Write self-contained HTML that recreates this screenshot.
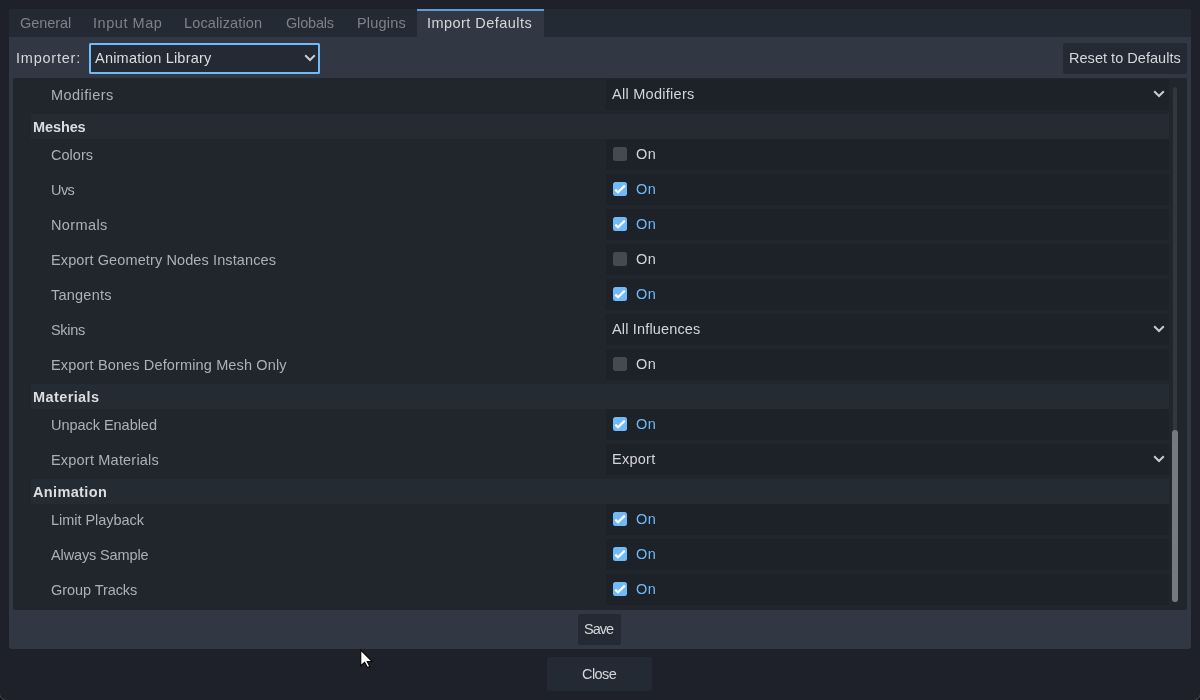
<!DOCTYPE html>
<html><head><meta charset="utf-8">
<style>
*{box-sizing:border-box;margin:0;padding:0}
html,body{width:1200px;height:700px;overflow:hidden;background:#1e2129;font-family:"Liberation Sans",sans-serif;font-size:14.5px;position:relative}
.a{position:absolute}
.t{position:absolute;white-space:nowrap;line-height:0;height:0;margin-top:-5px;will-change:transform}
.b{font-weight:bold}
</style></head><body>
<div class="a" style="left:9px;top:9px;width:1182px;height:28px;background:#232a33;border-radius:3px 3px 0 0"></div>
<div class="a" style="left:417px;top:9px;width:127px;height:28px;background:#313743;border-top:2px solid #619dd2"></div>
<div class="t" style="left:20.30px;top:28px;color:#7e8187;letter-spacing:-0.077px">General</div>
<div class="t" style="left:93.20px;top:28px;color:#7e8187;letter-spacing:0.547px">Input Map</div>
<div class="t" style="left:184.40px;top:28px;color:#7e8187;letter-spacing:0.135px">Localization</div>
<div class="t" style="left:285.60px;top:28px;color:#7e8187;letter-spacing:-0.186px">Globals</div>
<div class="t" style="left:356.60px;top:28px;color:#7e8187;letter-spacing:0.182px">Plugins</div>
<div class="t" style="left:427.30px;top:28px;color:#d6d7da;letter-spacing:0.453px">Import Defaults</div>
<div class="a" style="left:9px;top:37px;width:1182px;height:612px;background:#313743;border-radius:0 0 3px 3px"></div>
<div class="t" style="left:16.40px;top:63px;color:#d6d7da;letter-spacing:0.777px">Importer:</div>
<div class="a" style="left:89px;top:43px;width:231px;height:31px;background:#232a33;border:2px solid #70bafa;border-radius:1.5px"></div>
<div class="t" style="left:95.40px;top:63px;color:#dcdde0;letter-spacing:0.214px">Animation Library</div>
<svg class="a" style="left:304px;top:54px" width="12" height="8" viewBox="0 0 12 8"><path d="M1.2 1.2 L6 6 L10.8 1.2" fill="none" stroke="#cacbce" stroke-width="2"/></svg>
<div class="a" style="left:1063px;top:43px;width:124px;height:31px;background:#242a33;border-radius:2px"></div>
<div class="t" style="left:1068.75px;top:63px;color:#d6d7da;letter-spacing:0.036px">Reset to Defaults</div>
<div class="a" style="left:13px;top:78px;width:1174px;height:532px;background:#21262d;border-radius:2px;overflow:hidden">
<div class="a" style="left:593px;top:1px;width:563px;height:31px;background:#1d2128;border-radius:2px"></div>
<div class="t" style="left:37.70px;top:22px;color:#aeb0b4;letter-spacing:0.429px">Modifiers</div>
<div class="t" style="left:598.50px;top:21px;color:#d4d5d8;letter-spacing:0.274px">All Modifiers</div>
<svg class="a" style="left:1140px;top:12px" width="12" height="8" viewBox="0 0 12 8"><path d="M1.2 1.2 L6 6 L10.8 1.2" fill="none" stroke="#cacbce" stroke-width="2"/></svg>
<div class="a" style="left:18px;top:36px;width:1138px;height:25px;background:#242b33"></div>
<div class="t b" style="left:19.80px;top:54px;color:#dcdde0;letter-spacing:-0.106px">Meshes</div>
<div class="a" style="left:593px;top:61px;width:563px;height:31px;background:#1d2128;border-radius:2px"></div>
<div class="t" style="left:37.70px;top:82px;color:#aeb0b4;letter-spacing:0.030px">Colors</div>
<div class="a" style="left:600px;top:69px;width:14px;height:14px;border-radius:2.5px;background:#464950"></div>
<div class="t" style="left:622.70px;top:81px;color:#d4d5d8;letter-spacing:0.421px">On</div>
<div class="a" style="left:593px;top:96px;width:563px;height:31px;background:#1d2128;border-radius:2px"></div>
<div class="t" style="left:37.70px;top:117px;color:#aeb0b4;letter-spacing:-0.561px">Uvs</div>
<svg class="a" style="left:600px;top:104px" width="14" height="14" viewBox="0 0 14 14"><rect x="0" y="0" width="14" height="14" rx="2.5" fill="#70bafa"/><path d="M2.3 7.6 L5 10.3 L11.8 3.6" fill="none" stroke="#fff" stroke-width="2.2"/></svg>
<div class="t" style="left:622.70px;top:116px;color:#70bafa;letter-spacing:0.421px">On</div>
<div class="a" style="left:593px;top:131px;width:563px;height:31px;background:#1d2128;border-radius:2px"></div>
<div class="t" style="left:37.70px;top:152px;color:#aeb0b4;letter-spacing:0.379px">Normals</div>
<svg class="a" style="left:600px;top:139px" width="14" height="14" viewBox="0 0 14 14"><rect x="0" y="0" width="14" height="14" rx="2.5" fill="#70bafa"/><path d="M2.3 7.6 L5 10.3 L11.8 3.6" fill="none" stroke="#fff" stroke-width="2.2"/></svg>
<div class="t" style="left:622.70px;top:151px;color:#70bafa;letter-spacing:0.421px">On</div>
<div class="a" style="left:593px;top:166px;width:563px;height:31px;background:#1d2128;border-radius:2px"></div>
<div class="t" style="left:37.70px;top:187px;color:#aeb0b4;letter-spacing:0.111px">Export Geometry Nodes Instances</div>
<div class="a" style="left:600px;top:174px;width:14px;height:14px;border-radius:2.5px;background:#464950"></div>
<div class="t" style="left:622.70px;top:186px;color:#d4d5d8;letter-spacing:0.421px">On</div>
<div class="a" style="left:593px;top:201px;width:563px;height:31px;background:#1d2128;border-radius:2px"></div>
<div class="t" style="left:37.70px;top:222px;color:#aeb0b4;letter-spacing:0.229px">Tangents</div>
<svg class="a" style="left:600px;top:209px" width="14" height="14" viewBox="0 0 14 14"><rect x="0" y="0" width="14" height="14" rx="2.5" fill="#70bafa"/><path d="M2.3 7.6 L5 10.3 L11.8 3.6" fill="none" stroke="#fff" stroke-width="2.2"/></svg>
<div class="t" style="left:622.70px;top:221px;color:#70bafa;letter-spacing:0.421px">On</div>
<div class="a" style="left:593px;top:236px;width:563px;height:31px;background:#1d2128;border-radius:2px"></div>
<div class="t" style="left:37.70px;top:257px;color:#aeb0b4;letter-spacing:-0.327px">Skins</div>
<div class="t" style="left:598.50px;top:256px;color:#d4d5d8;letter-spacing:0.162px">All Influences</div>
<svg class="a" style="left:1140px;top:247px" width="12" height="8" viewBox="0 0 12 8"><path d="M1.2 1.2 L6 6 L10.8 1.2" fill="none" stroke="#cacbce" stroke-width="2"/></svg>
<div class="a" style="left:593px;top:271px;width:563px;height:31px;background:#1d2128;border-radius:2px"></div>
<div class="t" style="left:37.70px;top:292px;color:#aeb0b4;letter-spacing:0.137px">Export Bones Deforming Mesh Only</div>
<div class="a" style="left:600px;top:279px;width:14px;height:14px;border-radius:2.5px;background:#464950"></div>
<div class="t" style="left:622.70px;top:291px;color:#d4d5d8;letter-spacing:0.421px">On</div>
<div class="a" style="left:18px;top:306px;width:1138px;height:25px;background:#242b33"></div>
<div class="t b" style="left:19.80px;top:324px;color:#dcdde0;letter-spacing:0.400px">Materials</div>
<div class="a" style="left:593px;top:331px;width:563px;height:31px;background:#1d2128;border-radius:2px"></div>
<div class="t" style="left:37.70px;top:352px;color:#aeb0b4;letter-spacing:-0.034px">Unpack Enabled</div>
<svg class="a" style="left:600px;top:339px" width="14" height="14" viewBox="0 0 14 14"><rect x="0" y="0" width="14" height="14" rx="2.5" fill="#70bafa"/><path d="M2.3 7.6 L5 10.3 L11.8 3.6" fill="none" stroke="#fff" stroke-width="2.2"/></svg>
<div class="t" style="left:622.70px;top:351px;color:#70bafa;letter-spacing:0.421px">On</div>
<div class="a" style="left:593px;top:366px;width:563px;height:31px;background:#1d2128;border-radius:2px"></div>
<div class="t" style="left:37.70px;top:387px;color:#aeb0b4;letter-spacing:0.200px">Export Materials</div>
<div class="t" style="left:598.50px;top:386px;color:#d4d5d8;letter-spacing:0.264px">Export</div>
<svg class="a" style="left:1140px;top:377px" width="12" height="8" viewBox="0 0 12 8"><path d="M1.2 1.2 L6 6 L10.8 1.2" fill="none" stroke="#cacbce" stroke-width="2"/></svg>
<div class="a" style="left:18px;top:401px;width:1138px;height:25px;background:#242b33"></div>
<div class="t b" style="left:19.80px;top:419px;color:#dcdde0;letter-spacing:0.359px">Animation</div>
<div class="a" style="left:593px;top:426px;width:563px;height:31px;background:#1d2128;border-radius:2px"></div>
<div class="t" style="left:37.70px;top:447px;color:#aeb0b4;letter-spacing:-0.033px">Limit Playback</div>
<svg class="a" style="left:600px;top:434px" width="14" height="14" viewBox="0 0 14 14"><rect x="0" y="0" width="14" height="14" rx="2.5" fill="#70bafa"/><path d="M2.3 7.6 L5 10.3 L11.8 3.6" fill="none" stroke="#fff" stroke-width="2.2"/></svg>
<div class="t" style="left:622.70px;top:446px;color:#70bafa;letter-spacing:0.421px">On</div>
<div class="a" style="left:593px;top:461px;width:563px;height:31px;background:#1d2128;border-radius:2px"></div>
<div class="t" style="left:37.70px;top:482px;color:#aeb0b4;letter-spacing:-0.130px">Always Sample</div>
<svg class="a" style="left:600px;top:469px" width="14" height="14" viewBox="0 0 14 14"><rect x="0" y="0" width="14" height="14" rx="2.5" fill="#70bafa"/><path d="M2.3 7.6 L5 10.3 L11.8 3.6" fill="none" stroke="#fff" stroke-width="2.2"/></svg>
<div class="t" style="left:622.70px;top:481px;color:#70bafa;letter-spacing:0.421px">On</div>
<div class="a" style="left:593px;top:496px;width:563px;height:31px;background:#1d2128;border-radius:2px"></div>
<div class="t" style="left:37.70px;top:517px;color:#aeb0b4;letter-spacing:-0.067px">Group Tracks</div>
<svg class="a" style="left:600px;top:504px" width="14" height="14" viewBox="0 0 14 14"><rect x="0" y="0" width="14" height="14" rx="2.5" fill="#70bafa"/><path d="M2.3 7.6 L5 10.3 L11.8 3.6" fill="none" stroke="#fff" stroke-width="2.2"/></svg>
<div class="t" style="left:622.70px;top:516px;color:#70bafa;letter-spacing:0.421px">On</div>
<div class="a" style="left:1160px;top:9px;width:4px;height:514px;background:#31363f;border-radius:2px"></div>
<div class="a" style="left:1159px;top:352px;width:6px;height:172px;background:#767a80;border-radius:3px"></div>
</div>
<div class="a" style="left:578px;top:614px;width:43px;height:31px;background:#242a33;border-radius:2px"></div>
<div class="t" style="left:584.30px;top:634px;color:#d6d7da;letter-spacing:-0.995px">Save</div>
<div class="a" style="left:547px;top:657px;width:105px;height:34px;background:#242a33;border-radius:2px"></div>
<div class="t" style="left:581.50px;top:679px;color:#d6d7da;letter-spacing:-0.577px">Close</div>
<svg class="a" style="left:350px;top:640px" width="30" height="35" viewBox="350 640 30 35"><path d="M360.75 650 L360.75 665.7 L364.6 662.3 L367.5 667.5 L369.8 666.6 L367.2 661.5 L372 661.4 Z" fill="#fff" stroke="#000" stroke-width="1.1" stroke-linejoin="miter"/></svg>
<svg class="a" style="left:0;top:680px" width="20" height="20" viewBox="0 680 20 20"><path d="M-1 693 A8 8 0 0 0 7 701 L-1 701 Z" fill="#0c0d0f"/><path d="M-0.5 693 A7.5 7.5 0 0 0 7 700.5" fill="none" stroke="#46484c" stroke-width="1"/></svg>
<svg class="a" style="left:1180px;top:680px" width="20" height="20" viewBox="1180 680 20 20"><path d="M1201 693 A8 8 0 0 1 1193 701 L1201 701 Z" fill="#0c0d0f"/><path d="M1200.5 693 A7.5 7.5 0 0 1 1193 700.5" fill="none" stroke="#46484c" stroke-width="1"/></svg>
</body></html>
